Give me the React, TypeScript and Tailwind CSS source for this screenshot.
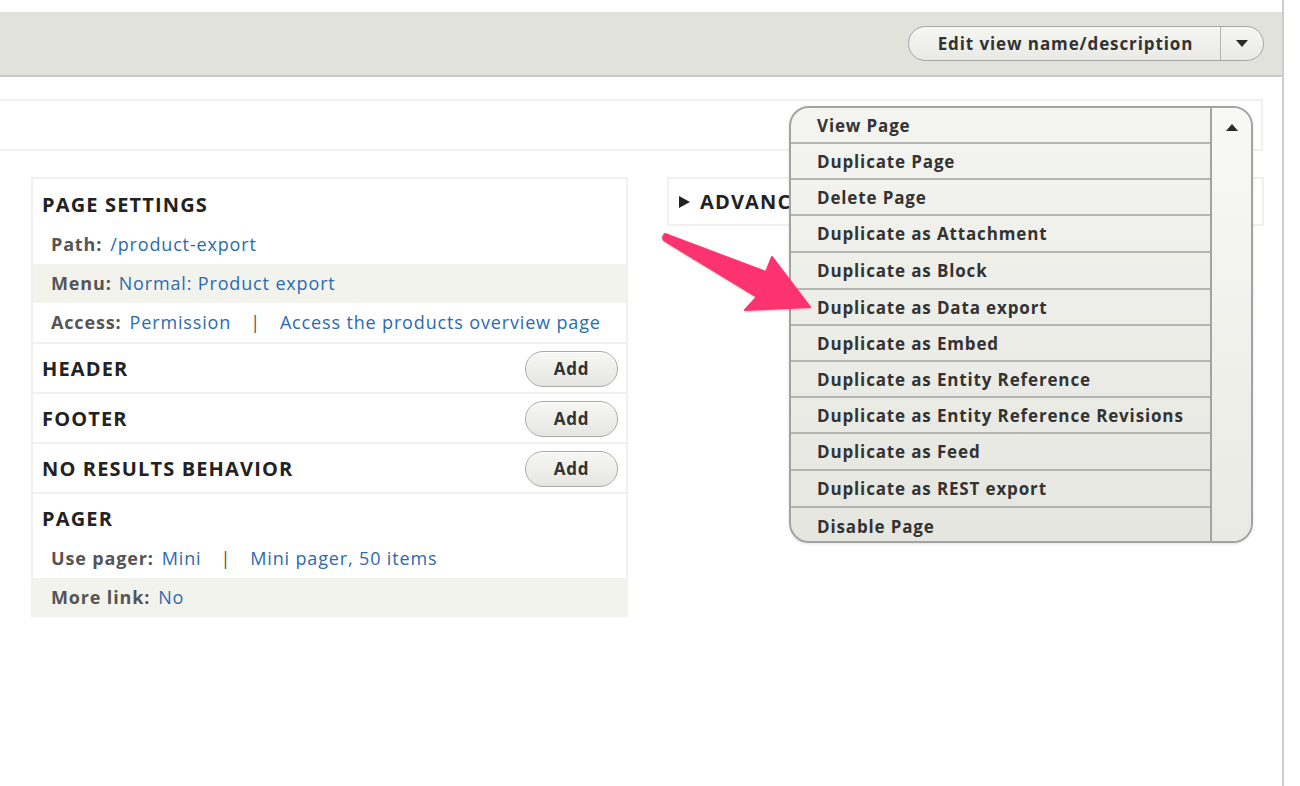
import React from "react";

const items: [string, string][] = [
  ["View Page", "h-[36px]"],
  ["Duplicate Page", "h-[36px]"],
  ["Delete Page", "h-[36px]"],
  ["Duplicate as Attachment", "h-[37px]"],
  ["Duplicate as Block", "h-[37px]"],
  ["Duplicate as Data export", "h-[36px]"],
  ["Duplicate as Embed", "h-[36px]"],
  ["Duplicate as Entity Reference", "h-[36px]"],
  ["Duplicate as Entity Reference Revisions", "h-[36px]"],
  ["Duplicate as Feed", "h-[37px]"],
  ["Duplicate as REST export", "h-[37px]"],
  ["Disable Page", "h-[36px]"],
];

function Caret({ up = false }: { up?: boolean }) {
  return (
    <svg width="12" height="7" viewBox="0 0 12 7" className="block">
      {up ? (
        <polygon points="0,7 12,7 6,0" fill="#2a2a2a" />
      ) : (
        <polygon points="0,0 12,0 6,7" fill="#2a2a2a" />
      )}
    </svg>
  );
}

function AddButton() {
  return (
    <button className="w-[93px] h-[36px] rounded-full border-[1.5px] border-[#a9a9a9] bg-gradient-to-b from-[#f7f7f4] to-[#e6e6e1] text-[17px] font-bold text-[#333] leading-none tracking-[0.8px] shadow-[inset_0_1px_0_#fff]">
      Add
    </button>
  );
}

export default function App() {
  const font = { fontFamily: '"Open Sans", "DejaVu Sans", sans-serif' };
  return (
    <div
      className="relative w-[1300px] h-[786px] bg-white overflow-hidden"
      style={font}
    >
      <div className="w-[1284px] h-full pt-[12px] border-r-2 border-[#cdcdcd]">
        {/* Header bar */}
        <div className="h-[65px] bg-[#e2e2dd] border-b-2 border-[#c9c9c5] flex items-center justify-end pr-[18px]">
          <div className="flex h-[35px] w-[356px] rounded-full border-[1.5px] border-[#a6a6a6] bg-gradient-to-b from-[#f6f6f3] to-[#e9e9e5] overflow-hidden">
            <div className="flex-1 flex items-center justify-center text-[17px] font-bold text-[#333] tracking-[0.9px] pl-[2px]">
              Edit view name/description
            </div>
            <div className="w-[43px] border-l-[1.5px] border-[#b3b3b3] flex items-center justify-center">
              <Caret />
            </div>
          </div>
        </div>

        {/* Top strip box */}
        <div className="mt-[22px] w-[1263px] h-[52px] border-y-2 border-r-2 border-[#f0f0f0]" />

        {/* Columns */}
        <div className="mt-[26px] flex pl-[31px] gap-[39px]">
          {/* Left column */}
          <div className="w-[597px] border-x-2 border-t-2 border-[#f0f0f0] text-[18px] tracking-[0.85px]">
            <div className="h-[45px] pt-[15px] pl-[9px]">
              <div className="leading-[22px] text-[20px] font-bold text-[#222] tracking-[1.15px]">
                PAGE SETTINGS
              </div>
            </div>
            <div className="h-[40px] flex items-center pl-[18px]">
              <span className="font-bold text-[#555]">Path:</span>
              <span className="ml-[8px] text-[#2b6aaf]">/product-export</span>
            </div>
            <div className="h-[39px] flex items-center pl-[18px] bg-[#f3f3ee]">
              <span className="font-bold text-[#555]">Menu:</span>
              <span className="ml-[7px] text-[#2b6aaf]">Normal: Product export</span>
            </div>
            <div className="h-[39px] flex items-center pl-[18px]">
              <span className="font-bold text-[#555]">Access:</span>
              <span className="ml-[8px] text-[#2b6aaf]">Permission</span>
              <span className="mx-[19px] text-[#555]">|</span>
              <span className="text-[#2b6aaf]">Access the products overview page</span>
            </div>
            <div className="h-[2px] bg-[#f0f0f0]" />
            <div className="h-[48px] flex items-center justify-between pl-[9px] pr-[8px] pt-[1px]">
              <span className="text-[20px] font-bold text-[#222] tracking-[1.15px]">HEADER</span>
              <AddButton />
            </div>
            <div className="h-[2px] bg-[#f0f0f0]" />
            <div className="h-[48px] flex items-center justify-between pl-[9px] pr-[8px] pt-[1px]">
              <span className="text-[20px] font-bold text-[#222] tracking-[1.15px]">FOOTER</span>
              <AddButton />
            </div>
            <div className="h-[2px] bg-[#f0f0f0]" />
            <div className="h-[48px] flex items-center justify-between pl-[9px] pr-[8px] pt-[1px]">
              <span className="text-[20px] font-bold text-[#222] tracking-[1.15px]">NO RESULTS BEHAVIOR</span>
              <AddButton />
            </div>
            <div className="h-[2px] bg-[#f0f0f0]" />
            <div className="h-[45px] pt-[14px] pl-[9px]">
              <div className="leading-[22px] text-[20px] font-bold text-[#222] tracking-[1.15px]">PAGER</div>
            </div>
            <div className="h-[39px] flex items-center pl-[18px]">
              <span className="font-bold text-[#555]">Use pager:</span>
              <span className="ml-[8px] text-[#2b6aaf]">Mini</span>
              <span className="mx-[19px] text-[#555]">|</span>
              <span className="text-[#2b6aaf]">Mini pager, 50 items</span>
            </div>
            <div className="h-[39px] flex items-center bg-[#f3f3ee] -mx-[2px] px-[20px]">
              <span className="font-bold text-[#555]">More link:</span>
              <span className="ml-[8px] text-[#2b6aaf]">No</span>
            </div>
          </div>

          {/* Right column */}
          <div className="w-[597px]">
            <div className="h-[49px] border-2 border-[#f0f0f0] flex items-center pl-[10px]">
              <svg width="11" height="12" viewBox="0 0 11 12" className="mr-[10px]">
                <polygon points="0,0 11,6 0,12" fill="#222" />
              </svg>
              <span className="text-[20px] font-bold text-[#222] tracking-[1.15px]">ADVANCED</span>
            </div>
          </div>
        </div>
      </div>

      {/* Dropdown menu */}
      <div className="absolute left-[789px] top-[106px] w-[464px] h-[437px] flex rounded-[20px] border-2 border-[#a3a3a3] overflow-hidden bg-gradient-to-b from-[#f4f4f0] to-[#e6e6e1] shadow-[0_1px_3px_rgba(0,0,0,0.12)] z-10">
        <div className="w-[419px] flex flex-col">
          {items.map(([t, h], i) => (
            <div
              key={t}
              className={
                h +
                " shrink-0 flex items-center pl-[26px] pt-[1px] text-[17px] font-bold text-[#333] tracking-[0.85px] " +
                (i < items.length - 1 ? "border-b-2 border-[#b4b4b2]" : "")
              }
            >
              {t}
            </div>
          ))}
        </div>
        <div className="flex-1 border-l-2 border-[#a3a3a3] bg-gradient-to-b from-[#f8f8f5] to-[#eaeae4] flex justify-center pt-[16px]">
          <Caret up />
        </div>
      </div>

      {/* Pink arrow */}
      <svg
        className="absolute left-0 top-0 z-20 pointer-events-none"
        width="1300"
        height="786"
        viewBox="0 0 1300 786"
      >
        <defs>
          <filter id="sh" x="-20%" y="-20%" width="140%" height="140%">
            <feDropShadow dx="0" dy="1" stdDeviation="1" floodColor="#000" floodOpacity="0.2" />
          </filter>
        </defs>
        <path
          d="M665 234 L766 272 L772 257 L810 307 L745 310 L757 297 L665 241 Q661 237.5 665 234 Z"
          fill="#fd3270"
          stroke="#fd3270"
          strokeWidth="2"
          strokeLinejoin="round"
          filter="url(#sh)"
        />
      </svg>
    </div>
  );
}
